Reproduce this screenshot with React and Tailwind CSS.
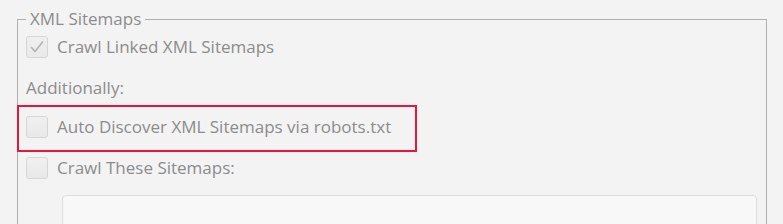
import React from "react";

function Box({ checked }) {
  return (
    <div className="w-[22px] h-[22px] shrink-0 rounded-[3px] border border-[#d6d6d6] bg-gradient-to-b from-[#f0f0f0] to-[#e9e9e9] flex items-center justify-center">
      {checked && (
        <svg width="16" height="14" viewBox="0 0 16 14" fill="none">
          <path d="M2.5 7.5 L6 11.5 L13.5 2" stroke="#b3b3b3" strokeWidth="1.6" strokeLinecap="round" strokeLinejoin="round" />
        </svg>
      )}
    </div>
  );
}

function Row({ checked, label }) {
  return (
    <div className="flex items-center gap-[9px] h-[22px]">
      <Box checked={checked} />
      <span className="leading-[20px]">{label}</span>
    </div>
  );
}

export default function App() {
  return (
    <div
      className="w-[783px] h-[224px] bg-[#f3f3f3] overflow-hidden text-[17px] text-[#8c8c8c] pt-[9px] pl-[17px] pr-[16px]"
      style={{ fontFamily: '"Open Sans", "Noto Sans", sans-serif' }}
    >
      <fieldset className="border border-[#b0b0b0] pl-[8px] pr-[9px] pt-[7px] h-[260px]">
        <legend className="ml-0 px-[4px] leading-[20px] mt-[1px]">XML Sitemaps</legend>
        <Row checked label="Crawl Linked XML Sitemaps" />
        <div className="leading-[20px] mt-[20px]">Additionally:</div>
        <div className="relative mt-[18px]">
          <Row label="Auto Discover XML Sitemaps via robots.txt" />
          <div className="absolute -left-[9px] -top-[11px] w-[400px] h-[47px] border-2 border-[#e8163f] pointer-events-none" />
        </div>
        <div className="mt-[19px]">
          <Row label="Crawl These Sitemaps:" />
        </div>
        <div className="ml-[36px] mt-[16px] h-[60px] rounded-[4px] border border-[#dedede] bg-[#f8f8f8]" />
      </fieldset>
    </div>
  );
}
